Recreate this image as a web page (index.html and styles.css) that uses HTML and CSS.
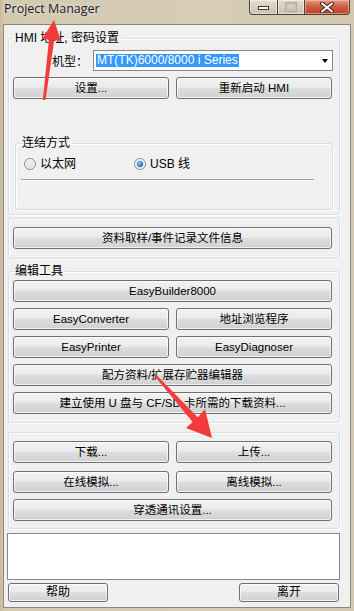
FILE: index.html
```html
<!DOCTYPE html>
<html lang="zh-CN">
<head>
  <meta charset="UTF-8" />
  <title>Project Manager</title>
  <link rel="stylesheet" href="styles.css">
</head>
<body>

<div class="window">
  <div class="titlebar">
    <span class="title">Project Manager</span>
    <div class="caption">
      <span class="cb min"><span class="min-bar"></span></span>
      <span class="cb max"><span class="max-box"></span></span>
      <span class="cb close">
        <svg width="14" height="11" viewBox="0 0 14 11">
          <path d="M2 1.5 L12 9.5 M12 1.5 L2 9.5" stroke="#3b2b26" stroke-width="4" stroke-linecap="round"/>
          <path d="M2 1.5 L12 9.5 M12 1.5 L2 9.5" stroke="#fff" stroke-width="2" stroke-linecap="round"/>
        </svg>
      </span>
    </div>
  </div>

  <div class="client">
    <fieldset class="group hmi">
      <legend>HMI 地址, 密码设置</legend>
      <div class="model-row">
        <span class="model-label">机型：</span>
        <div class="combo">
          <span class="sel">MT(TK)6000/8000 i Series</span>
          <span class="drop"></span>
        </div>
      </div>
      <div class="row2 hmi-btns">
        <button class="btn">设置...</button>
        <button class="btn">重新启动 HMI</button>
      </div>

      <fieldset class="group conn">
        <legend>连结方式</legend>
        <div class="radios">
          <label class="radio-item"><span class="radio"></span>以太网</label>
          <label class="radio-item"><span class="radio checked"></span>USB 线</label>
        </div>
        <div class="sep"></div>
      </fieldset>
    </fieldset>

    <fieldset class="group log-info">
      <button class="btn">资料取样/事件记录文件信息</button>
    </fieldset>

    <fieldset class="group tools">
      <legend>编辑工具</legend>
      <button class="btn">EasyBuilder8000</button>
      <div class="row2">
        <button class="btn">EasyConverter</button>
        <button class="btn">地址浏览程序</button>
      </div>
      <div class="row2">
        <button class="btn">EasyPrinter</button>
        <button class="btn">EasyDiagnoser</button>
      </div>
      <button class="btn">配方资料/扩展存贮器编辑器</button>
      <button class="btn">建立使用 U 盘与 CF/SD 卡所需的下载资料...</button>
    </fieldset>

    <fieldset class="group transfer">
      <div class="row2">
        <button class="btn">下载...</button>
        <button class="btn">上传...</button>
      </div>
      <div class="row2 sim">
        <button class="btn">在线模拟...</button>
        <button class="btn">离线模拟...</button>
      </div>
      <button class="btn pass">穿透通讯设置...</button>
    </fieldset>

    <div class="log"></div>

    <div class="footer">
      <button class="btn small">帮助</button>
      <button class="btn small">离开</button>
    </div>
  </div>

  <!-- red annotation arrows -->
  <svg class="marks" width="354" height="611" viewBox="0 0 354 611">
    <polygon fill="#f43b3b" points="54,20 61,41 54.2,40 45.5,100 42.8,100 49,39.5 42.5,38.5"/>
    <polygon fill="#f43b3b" points="212,438 186,428 192.6,421.9 154.3,375.7 155.7,374.3 197.8,417.2 205,409"/>
  </svg>
</div>

</body>
</html>
```

FILE: styles.css
```css
* {
  box-sizing: border-box;
}
body {
  margin: 0;
  width: 354px;
  height: 611px;
  overflow: hidden;
  font-family: "Liberation Sans", "Noto Sans CJK SC", sans-serif;
  font-size: 12px;
  color: #000;
  background: #d4cab2;
}
.window {
  position: relative;
  height: 611px;
  display: flex;
  flex-direction: column;
  background: linear-gradient(90deg, #c9b99c 0, #d3c9b1 4px, #d7cdb7 60%, #d2c8b2 100%);
}
.titlebar {
  height: 24px;
  display: flex;
  align-items: flex-start;
  padding-left: 4px;
}
.title {
  font-family: "Open Sans", sans-serif;
  font-size: 12.5px;
  line-height: 18px;
  color: #1c1c2c;
  text-shadow: 0 0 5px rgba(255, 255, 255, 0.7);
}
.caption {
  margin-left: auto;
  margin-right: 4px;
  display: flex;
}
.cb {
  height: 15px;
  border: 1px solid #4a4337;
  border-top: none;
  display: flex;
  justify-content: center;
  align-items: center;
}
.min {
  width: 28px;
  border-right: none;
  border-bottom-left-radius: 4px;
  background: linear-gradient(#e4ddd0, #c9c0ae);
  box-shadow: inset 0 0 0 1px rgba(255, 255, 255, 0.45);
}
.min-bar {
  width: 11px;
  height: 4px;
  margin-top: 2px;
  background: #fff;
  border: 1px solid #3b3a40;
}
.max {
  width: 27px;
  border-right: none;
  background: linear-gradient(#e2dbcd, #cbc2b0);
  box-shadow: inset 0 0 0 1px rgba(255, 255, 255, 0.45);
}
.max-box {
  width: 10px;
  height: 8px;
  border: 2px solid #c9c3b8;
  outline: 1px solid #b0aa9e;
}
.close {
  width: 46px;
  border-bottom-right-radius: 4px;
  background: linear-gradient(#e49b86, #d0573f 50%, #c2412a);
  box-shadow: inset 0 0 0 1px rgba(255, 210, 190, 0.5);
}
.client {
  flex: 1;
  margin: 0 3px 3px;
  border: 1px solid #8d877b;
  background: #f0f0f0;
  padding: 0 10px 0 4px;
  display: flex;
  flex-direction: column;
}
.group {
  margin: 0;
  min-width: 0;
  border: 1px solid #d5dfe5;
  border-radius: 3px;
  box-shadow: inset 1px 1px 0 #fff, 1px 1px 0 #fff;
  display: flex;
  flex-direction: column;
}
.group legend {
  padding: 0 2px;
  line-height: 14px;
  font-size: 12px;
}
.hmi {
  margin-top: 6px;
  padding: 5px 7px 4px 4px;
}
.model-row {
  display: flex;
  justify-content: flex-end;
  align-items: center;
  margin-right: -1px;
}
.model-label {
  margin-right: 5px;
}
.combo {
  width: 240px;
  height: 21px;
  border: 1px solid #828790;
  background: #fff;
  display: flex;
  align-items: center;
  padding-left: 2px;
}
.sel {
  background: #3399ff;
  color: #fff;
  line-height: 13px;
  padding: 0 1px;
}
.drop {
  margin-left: auto;
  margin-right: 4px;
  margin-top: 1px;
  border-left: 3.5px solid transparent;
  border-right: 3.5px solid transparent;
  border-top: 4px solid #000;
}
.row2 {
  display: grid;
  grid-template-columns: 1fr 1fr;
  gap: 7px;
}
.hmi-btns {
  margin-top: 6px;
}
.btn {
  height: 22px;
  margin: 0;
  padding: 0;
  border: 1px solid #707070;
  border-radius: 3px;
  background: linear-gradient(#f2f2f2, #ebebeb 45%, #dddddd 52%, #cfd1d3);
  box-shadow: inset 0 0 0 1px rgba(255, 255, 255, 0.7);
  font-family: "Liberation Sans", "Noto Sans CJK SC", sans-serif;
  font-size: 11.5px;
  line-height: 20px;
  color: #000;
}
.conn {
  margin: 37px -1px 0 2px;
  padding: 7px 4px 28px 4px;
}
.radios {
  display: flex;
  margin-left: 4px;
  height: 14px;
}
.radio-item {
  width: 110px;
  display: flex;
  align-items: center;
  gap: 4px;
  line-height: 14px;
}
.radio {
  width: 12px;
  height: 12px;
  border-radius: 50%;
  border: 1px solid #8e8f8f;
  background: radial-gradient(circle at 50% 40%, #f4f4f4 0, #dcdcdc 60%, #c9c9c9 100%);
  box-shadow: inset 0 0 0 1px #fff;
  display: flex;
  justify-content: center;
  align-items: center;
}
.radio.checked::after {
  content: "";
  width: 6px;
  height: 6px;
  border-radius: 50%;
  background: radial-gradient(circle at 40% 35%, #8fd0ff 0, #2a7fd1 55%, #13498a 100%);
}
.sep {
  margin: 8px 0 0 1px;
  width: 293px;
  border-top: 1px solid #a0a0a0;
  border-bottom: 1px solid #fff;
}
.log-info {
  margin-top: 3px;
  padding: 8px 7px 9px 4px;
}
.tools {
  margin-top: 5px;
  padding: 2px 7px 8px 4px;
  gap: 6px;
}
.transfer {
  margin-top: 9px;
  padding: 8px 7px 7px 4px;
}
.sim {
  margin-top: 8px;
}
.pass {
  margin-top: 6px;
}
.log {
  margin: 4px 0 0 -1px;
  height: 47px;
  border: 1px solid #828790;
  background: #fff;
}
.footer {
  margin-top: 3px;
  display: flex;
  justify-content: space-between;
  margin-right: 1px;
}
.btn.small {
  width: 100px;
  height: 19px;
  line-height: 17px;
  font-size: 12px;
}
.marks {
  position: absolute;
  top: 0;
  left: 0;
  pointer-events: none;
}
```
